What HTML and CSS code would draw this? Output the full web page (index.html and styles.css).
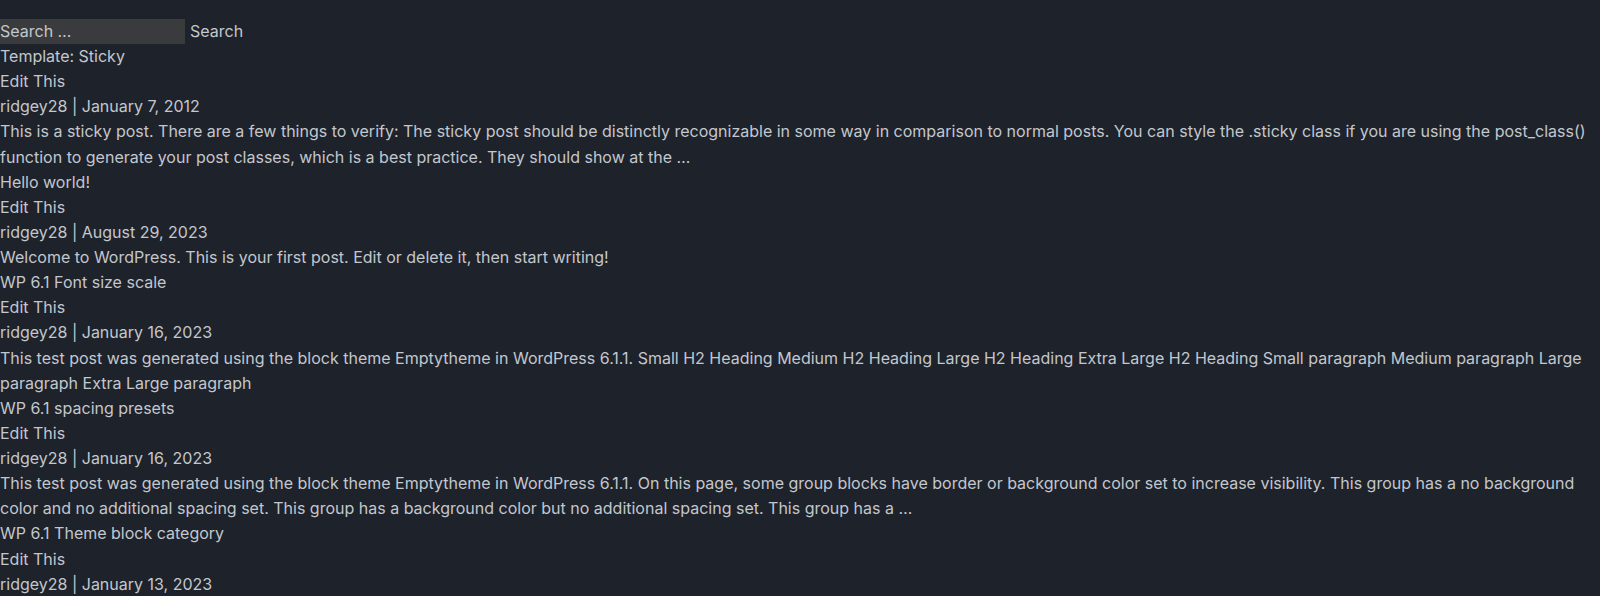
FILE: index.html
```html
<!DOCTYPE html>
<html lang="en">
<head>
<meta charset="utf-8">
<title>Posts</title>
<link rel="stylesheet" href="styles.css">
</head>
<body>
<main class="page">
  <form class="search-form">
    <input class="search-field" type="search" placeholder="Search …">
    <button class="search-submit" type="button">Search</button>
  </form>
  <article class="post">
    <div class="post-title">Template: Sticky</div>
    <div class="post-edit">Edit This</div>
    <div class="post-meta">ridgey28 | January 7, 2012</div>
    <p class="post-excerpt">This is a sticky post. There are a few things to verify: The sticky post should be distinctly recognizable in some way in comparison to normal posts. You can style the .sticky class if you are using the post_class() function to generate your post classes, which is a best practice. They should show at the …</p>
  </article>
  <article class="post">
    <div class="post-title">Hello world!</div>
    <div class="post-edit">Edit This</div>
    <div class="post-meta">ridgey28 | August 29, 2023</div>
    <p class="post-excerpt">Welcome to WordPress. This is your first post. Edit or delete it, then start writing!</p>
  </article>
  <article class="post">
    <div class="post-title">WP 6.1 Font size scale</div>
    <div class="post-edit">Edit This</div>
    <div class="post-meta">ridgey28 | January 16, 2023</div>
    <p class="post-excerpt">This test post was generated using the block theme Emptytheme in WordPress 6.1.1. Small H2 Heading Medium H2 Heading Large H2 Heading Extra Large H2 Heading Small paragraph Medium paragraph Large paragraph Extra Large paragraph</p>
  </article>
  <article class="post">
    <div class="post-title">WP 6.1 spacing presets</div>
    <div class="post-edit">Edit This</div>
    <div class="post-meta">ridgey28 | January 16, 2023</div>
    <p class="post-excerpt">This test post was generated using the block theme Emptytheme in WordPress 6.1.1. On this page, some group blocks have border or background color set to increase visibility. This group has a no background color and no additional spacing set. This group has a background color but no additional spacing set. This group has a …</p>
  </article>
  <article class="post">
    <div class="post-title">WP 6.1 Theme block category</div>
    <div class="post-edit">Edit This</div>
    <div class="post-meta">ridgey28 | January 13, 2023</div>
  </article>
</main>
</body>
</html>
```
FILE: styles.css
```css
html, body {
  margin: 0;
  padding: 0;
  background: #1e222a;
}
body {
  color: #c3c7ce;
  font-family: Inter, "Noto Sans", sans-serif;
  font-size: 16px;
  line-height: 25.12px;
}
.page {
  padding-top: 19px;
}
.search-form {
  display: flex;
  align-items: center;
  gap: 5px;
  height: 25px;
}
.search-field {
  width: 185px;
  height: 25px;
  box-sizing: border-box;
  margin: 0;
  padding: 0;
  border: 0;
  background: #3a3b3c;
  color: #c3c7ce;
  font: inherit;
  outline: none;
}
.search-field::placeholder {
  color: #c3c7ce;
  opacity: 1;
}
.search-submit {
  margin: 0;
  padding: 0;
  border: 0;
  background: transparent;
  color: #c3c7ce;
  font: inherit;
  cursor: pointer;
}
.post-excerpt {
  margin: 0;
}
```
